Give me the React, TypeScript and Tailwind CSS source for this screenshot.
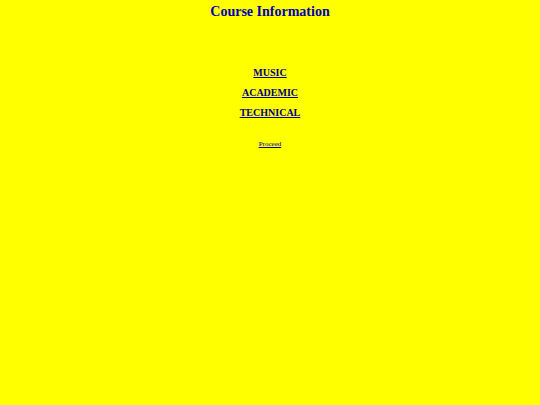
const courses = ["MUSIC", "ACADEMIC", "TECHNICAL"];

export default function App() {
  return (
    <main className="flex min-h-screen flex-col items-center bg-[#ffff00] pt-1 font-['Liberation_Serif',serif] text-[#000080]">
      <h1 className="text-[14px] leading-4 font-bold text-[#0000b4]">Course Information</h1>
      <nav aria-label="Courses" className="mt-[47px] flex flex-col items-center gap-2">
        {courses.map((course) => (
          <a key={course} href="#" className="text-[10px] leading-3 font-bold underline">
            {course}
          </a>
        ))}
      </nav>
      <a href="#" className="mt-[21px] text-[7px] leading-2 underline">
        Proceed
      </a>
    </main>
  );
}
